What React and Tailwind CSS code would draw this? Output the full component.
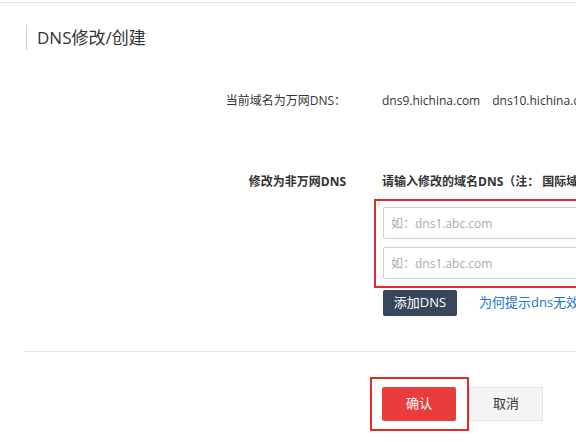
import React from 'react';

const font = "font-['Open_Sans','Noto_Sans_CJK_SC',sans-serif]";

const DnsInput = () => (
    <input
        type="text"
        placeholder="如：dns1.abc.com"
        className="block h-[32px] w-[320px] rounded-[2px] border border-[#cfcfcf] px-[7px] text-[12px] text-[#333] placeholder:text-[#aaa] outline-none"
    />
);

const App = () => {
    return (
        <div className={`h-[442px] w-[576px] overflow-hidden bg-white text-[#333] ${font}`}>
            <div className="mt-[2px] border-t border-[#e2e2e2]" />

            {/* 标题 */}
            <div className="ml-[26px] mt-[22px] flex h-[25px] items-center border-l border-[#d0d0d0] pl-[10px] text-[17px] leading-none">
                DNS修改/创建
            </div>

            {/* 当前DNS */}
            <div className="mt-[41px] flex h-5 items-center whitespace-nowrap text-[12px]">
                <div className="w-[346px] shrink-0 text-right">当前域名为万网DNS：</div>
                <div className="flex gap-[12px] pl-[36px]">
                    <span>dns9.hichina.com</span>
                    <span>dns10.hichina.com</span>
                </div>
            </div>

            {/* 修改为非万网DNS */}
            <div className="mt-[61px] flex items-start whitespace-nowrap text-[12px]">
                <div className="h-5 w-[346px] shrink-0 text-right font-bold leading-5">修改为非万网DNS</div>
                <div className="pl-[28px]">
                    <div className="ml-[8px] h-5 font-bold leading-5">请输入修改的域名DNS（注： 国际域名请填写完整DNS）</div>
                    <div className="mt-[7px] w-[260px] border-2 border-[#e02a2a] pb-[7px] pl-[7px] pt-[6px]">
                        <DnsInput />
                        <div className="mt-[8px]">
                            <DnsInput />
                        </div>
                    </div>
                    <div className="ml-[9px] mt-[2px] flex items-center gap-[22px]">
                        <button className="h-[26px] w-[74px] rounded-[2px] bg-[#37465a] text-[13px] text-white">添加DNS</button>
                        <a className="text-[13px] text-[#1a73c9]">为何提示dns无效？</a>
                    </div>
                </div>
            </div>

            <div className="ml-[24px] mt-[35px] border-t border-[#e2e2e2]" />

            {/* 操作按钮 */}
            <div className="ml-[370px] mt-[25px] flex items-start">
                <div className="border-2 border-[#e02a2a] py-[8px] pl-[10px] pr-[11px]">
                    <button className="block h-[34px] w-[74px] rounded-[2px] bg-[#e93c3c] text-[13px] text-white">确认</button>
                </div>
                <button className="mt-[10px] h-[34px] w-[74px] border border-[#e4e4e4] bg-[#f5f5f5] text-[13px] text-[#333]">取消</button>
            </div>
        </div>
    );
};

export default App;
